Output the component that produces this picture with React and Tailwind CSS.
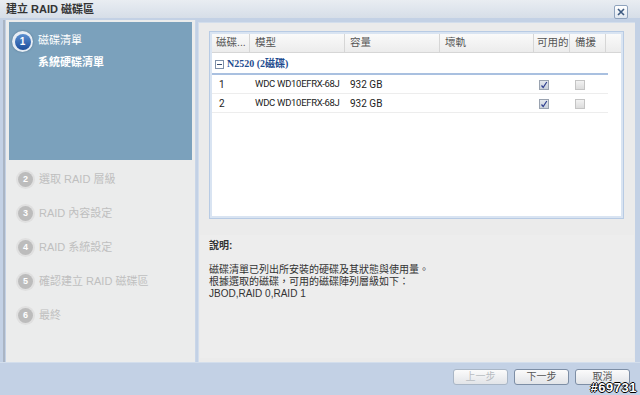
import React from 'react';

const font = 'font-["Liberation_Sans","Noto_Sans_CJK_TC",sans-serif]';

const steps = [
  { n: 2, label: '選取 RAID 層級' },
  { n: 3, label: 'RAID 內容設定' },
  { n: 4, label: 'RAID 系統設定' },
  { n: 5, label: '確認建立 RAID 磁碟區' },
  { n: 6, label: '最終' },
];

const disks = [
  { id: '1', model: 'WDC WD10EFRX-68J', size: '932 GB' },
  { id: '2', model: 'WDC WD10EFRX-68J', size: '932 GB' },
];

const Check = ({ checked }) => (
  <div
    className={`w-[10px] h-[10px] border flex items-center justify-center ${
      checked ? 'border-[#9aa3b0] bg-gradient-to-b from-[#e4e8ee] to-[#c9d0da]' : 'border-[#c4c4c4] bg-gradient-to-b from-[#f2f2f2] to-[#dcdcdc]'
    }`}
  >
    {checked && (
      <svg width="8" height="8" viewBox="0 0 8 8">
        <path d="M1.5 4.5 L3.2 6.5 L6.8 1" fill="none" stroke="#2f3f8f" strokeWidth="1.2" />
      </svg>
    )}
  </div>
);

const Btn = ({ children, disabled }) => (
  <button
    className={`w-[55px] h-[16px] rounded-[3px] border text-[10px] leading-none bg-gradient-to-b from-[#fbfbfb] to-[#e2e4e8] ${
      disabled ? 'border-[#a9b6c6] text-[#b8bcc2]' : 'border-[#7d8ea5] text-[#555]'
    }`}
  >
    {children}
  </button>
);

export default function App() {
  return (
    <div className={`relative w-[640px] h-[395px] bg-[#c3d1e5] flex flex-col overflow-hidden ${font}`}>
      {/* Title bar */}
      <div className="h-[18px] flex items-center justify-between pl-[6px] pr-[12px] bg-gradient-to-b from-[#e9edf2] to-[#d6dee8]">
        <span className="text-[11px] font-bold text-[#333]">建立 RAID 磁碟區</span>
        <div className="mt-[5px] w-[14px] h-[14px] border border-[#8fa3bd] rounded-[2px] bg-gradient-to-b from-[#ffffff] to-[#dfe6ef] flex items-center justify-center">
          <svg width="8" height="8" viewBox="0 0 8 8">
            <path d="M1 1 L7 7 M7 1 L1 7" stroke="#3d5a80" strokeWidth="1.6" />
          </svg>
        </div>
      </div>

      {/* Body */}
      <div className="flex-1 flex pl-[3px] pr-[5px] pt-[2px]">
        <div className="w-[2px] bg-[#aab5c4] mr-[1px]" />
        {/* Left steps panel */}
        <div className="w-[190px] bg-[#ebecec] border-r border-[#c9d6e8] flex flex-col">
          <div className="mx-[3px] mt-[2px] h-[138px] bg-[#7ba1bc] pl-[3px] pt-[9px]">
            <div className="flex items-start">
              <div className="w-[21px] h-[21px] rounded-full bg-[#e6edf4] flex items-center justify-center shadow-[0_0_2px_#4d6f8a]">
                <div className="w-[16px] h-[16px] rounded-full bg-gradient-to-b from-[#5a8fd0] to-[#1d4e9c] text-white text-[10px] font-bold flex items-center justify-center">
                  1
                </div>
              </div>
              <div className="ml-[5px] mt-[2px]">
                <div className="text-[11px] text-white leading-[14px]">磁碟清單</div>
                <div className="text-[11px] text-white font-bold leading-[14px] mt-[8px]">系統硬碟清單</div>
              </div>
            </div>
          </div>
          <div className="flex flex-col gap-[15px] pl-[10px] pt-[10px]">
            {steps.map((s) => (
              <div key={s.n} className="flex items-center h-[19px]">
                <div className="w-[19px] h-[19px] rounded-full bg-[#e0e0e0] flex items-center justify-center">
                  <div className="w-[15px] h-[15px] rounded-full bg-[#bcbcbc] text-white text-[9px] font-bold flex items-center justify-center">
                    {s.n}
                  </div>
                </div>
                <span className="ml-[4px] text-[11px] text-[#bfbfbf]">{s.label}</span>
              </div>
            ))}
          </div>
        </div>

        {/* Right content panel */}
        <div className="flex-1 ml-[2px] mt-[2px] border-l border-t border-[#d3deec] bg-[#ebebeb] flex flex-col">
          <div className="pl-[10px] pr-[11px] pt-[8px]">
            <div className="h-[188px] border border-[#b8cbe4] bg-[#d9e4f2] p-[2px]">
              <div className="h-full bg-white flex flex-col">
                {/* Header */}
                <div className="h-[19px] flex text-[10.5px] text-[#555] whitespace-nowrap bg-gradient-to-b from-[#fafafa] to-[#ececec] border-b border-[#d6d6d6]">
                  <div className="w-[38px] pl-[4px] flex items-center border-r border-[#d6d6d6]">磁碟...</div>
                  <div className="w-[95px] pl-[5px] flex items-center border-r border-[#d6d6d6]">模型</div>
                  <div className="w-[95px] pl-[5px] flex items-center border-r border-[#d6d6d6]">容量</div>
                  <div className="w-[94px] pl-[5px] flex items-center border-r border-[#d6d6d6]">壞軌</div>
                  <div className="w-[36px] pl-[3px] flex items-center border-r border-[#d6d6d6]">可用的</div>
                  <div className="w-[36px] pl-[5px] flex items-center border-r border-[#d6d6d6]">備援</div>
                  <div className="flex-1" />
                </div>
                {/* Group row */}
                <div className="w-[396px] h-[22px] flex items-center pl-[3px] border-b-2 border-[#a9c0e0]">
                  <svg width="9" height="9" viewBox="0 0 9 9" className="mt-[3px]">
                    <rect x="0.5" y="0.5" width="8" height="8" fill="#fff" stroke="#7d8fa8" />
                    <path d="M2 4.5 H7" stroke="#3a4f70" />
                  </svg>
                  <span className='ml-[3px] text-[10px] font-bold text-[#1f4c8f] font-["Liberation_Serif","Noto_Sans_CJK_TC",serif]'>
                    N2520 (2磁碟)
                  </span>
                </div>
                {disks.map((d) => (
                  <div key={d.id} className='w-[396px] h-[19px] flex items-center text-[10px] text-[#222] whitespace-nowrap border-b border-[#ededed] font-["Roboto","Liberation_Sans",sans-serif]'>
                    <div className="w-[38px] pl-[7px]">{d.id}</div>
                    <div className="w-[95px] pl-[5px] text-[9.5px] tracking-[-0.3px]">{d.model}</div>
                    <div className="w-[95px] pl-[5px]">{d.size}</div>
                    <div className="w-[94px]" />
                    <div className="w-[36px] pl-[5px] pt-[2px]">
                      <Check checked />
                    </div>
                    <div className="w-[36px] pl-[5px] pt-[2px]">
                      <Check />
                    </div>
                  </div>
                ))}
              </div>
            </div>
          </div>

          {/* Description */}
          <div className="flex-1 mx-[1px] mt-[16px] mb-[4px] bg-[#ededed] pl-[9px] pt-[4px] text-[10px] text-[#333]">
            <div className="font-bold leading-[13px]">說明:</div>
            <div className="mt-[12px] leading-[12px]">
              <div>磁碟清單已列出所安裝的硬碟及其狀態與使用量。</div>
              <div>根據選取的磁碟，可用的磁碟陣列層級如下：</div>
              <div>JBOD,RAID 0,RAID 1</div>
            </div>
          </div>
        </div>
      </div>

      {/* Footer */}
      <div className="h-[33px] flex items-start justify-end gap-[6px] pr-[10px] pt-[6px] border-t border-[#d3deec]">
        <Btn disabled>上一步</Btn>
        <Btn>下一步</Btn>
        <Btn>取消</Btn>
      </div>

      {/* Watermark overlay */}
      <div className="absolute right-[3px] bottom-[1px] text-[13px] font-bold leading-[12px] text-white tracking-[0.5px] [text-shadow:_-1px_0_#000,_1px_0_#000,_0_1px_#000,_0_-1px_#000]">
        #69731
      </div>
    </div>
  );
}
